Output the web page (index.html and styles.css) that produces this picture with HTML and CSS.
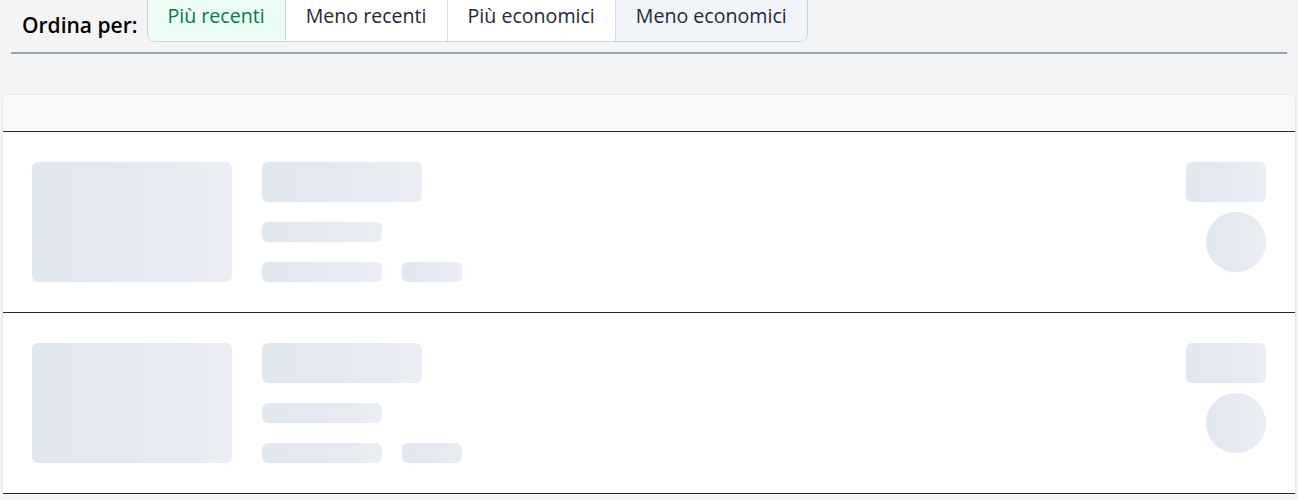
FILE: index.html
```html
<!DOCTYPE html>
<html lang="it">
<head>
<meta charset="utf-8">
<title>Ordina</title>
<link rel="stylesheet" href="styles.css">
</head>
<body>
<div class="sortbar">
  <div class="sort-row">
    <span class="sort-label">Ordina per:</span>
    <div class="btn-group">
      <button class="btn active">Più recenti</button>
      <button class="btn">Meno recenti</button>
      <button class="btn">Più economici</button>
      <button class="btn muted">Meno economici</button>
    </div>
  </div>
</div>

<div class="card">
  <div class="card-head"></div>
  <div class="item">
    <div class="sk thumb"></div>
    <div class="info">
      <div class="sk title"></div>
      <div class="sk line"></div>
      <div class="meta">
        <div class="sk line"></div>
        <div class="sk tag"></div>
      </div>
    </div>
    <div class="side">
      <div class="sk price"></div>
      <div class="sk circle"></div>
    </div>
  </div>
  <div class="item">
    <div class="sk thumb"></div>
    <div class="info">
      <div class="sk title"></div>
      <div class="sk line"></div>
      <div class="meta">
        <div class="sk line"></div>
        <div class="sk tag"></div>
      </div>
    </div>
    <div class="side">
      <div class="sk price"></div>
      <div class="sk circle"></div>
    </div>
  </div>
</div>
</body>
</html>
```
FILE: styles.css
```css
html, body {
  margin: 0;
  padding: 0;
  background: #f3f4f6;
  font-family: "Open Sans", "Noto Sans", sans-serif;
}

.sortbar {
  margin: 0 11px;
  border-bottom: 2px solid #9ca3af;
  padding: 0 0 10px 11px;
}

.sort-row {
  display: flex;
  align-items: center;
  gap: 9px;
}

.sort-label {
  font-size: 21px;
  font-weight: 600;
  color: #000;
  padding-top: 7px;
}

.btn-group {
  display: flex;
  margin-top: -1px;
  border: 1px solid #cbd5e1;
  border-radius: 0 0 8px 8px;
  overflow: hidden;
  background: #fff;
}

.btn {
  font-family: inherit;
  font-size: 19.6px;
  font-weight: 500;
  color: #1f2937;
  background: #fff;
  border: none;
  border-left: 1px solid #d1d9e4;
  padding: 0 20px 10px;
  height: 41px;
  line-height: 30px;
  cursor: pointer;
}

.btn:first-child {
  border-left: none;
}

.btn.active {
  background: #ecfdf5;
  color: #047857;
}

.btn.muted {
  background: #f1f5f9;
}

.card {
  margin: 40px 2px 0 2px;
  background: #fff;
  border: 1px solid #e2e8f0;
  border-radius: 6px 6px 0 0;
  border-bottom: none;
}

.card-head {
  height: 36px;
  background: #f8fafc;
  border-radius: 6px 6px 0 0;
  border-bottom: 1px solid #1e293b;
}

.item {
  display: flex;
  gap: 30px;
  padding: 30px 29px;
  border-bottom: 1px solid #1e293b;
}

.sk {
  background: linear-gradient(90deg, #e2e8f0 0%, #e4e8f0 40%, #eaedf4 100%);
  border-radius: 6px;
}

.thumb {
  width: 200px;
  height: 120px;
}

.info {
  flex: 1;
  display: flex;
  flex-direction: column;
  gap: 20px;
}

.title {
  width: 160px;
  height: 40px;
}

.line {
  width: 120px;
  height: 20px;
}

.meta {
  display: flex;
  gap: 20px;
}

.tag {
  width: 60px;
  height: 20px;
}

.side {
  display: flex;
  flex-direction: column;
  align-items: flex-end;
  gap: 10px;
}

.price {
  width: 80px;
  height: 40px;
}

.circle {
  width: 60px;
  height: 60px;
  border-radius: 50%;
}
```
